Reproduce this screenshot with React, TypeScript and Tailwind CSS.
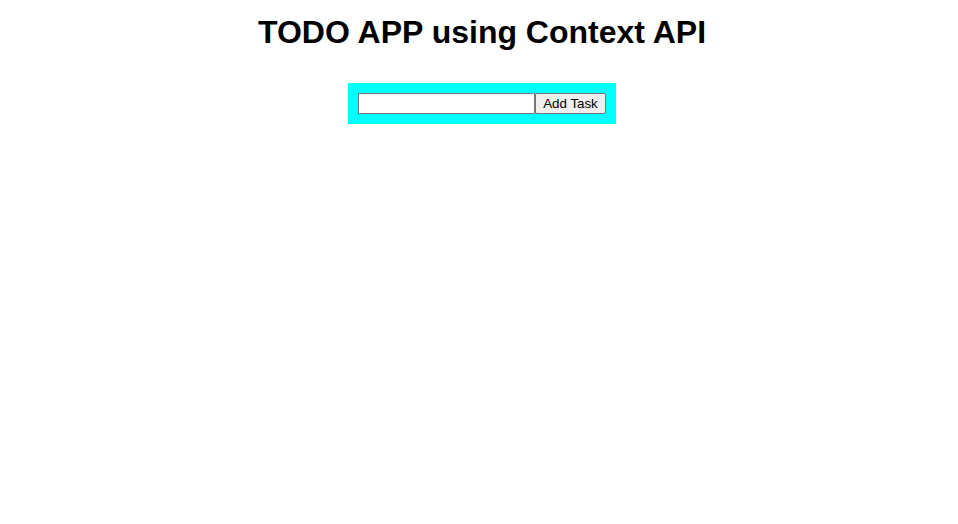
export default function App() {
  return (
    <div className="min-h-screen bg-white pl-[6px] font-['Liberation_Sans',Arial,sans-serif] text-black">
      <div className="flex flex-col items-center">
        <h1 className="mt-[14px] mb-[32px] text-[32px] leading-[37px] font-bold">TODO APP using Context API</h1>
        <div className="flex items-center bg-[#00ffff] p-[10px]">
          <input
            type="text"
            className="h-[21px] w-[177px] border border-[#767676] bg-white px-[2px] text-[13.33px] outline-none"
          />
          <button className="h-[21px] w-[71px] rounded-[2px] border border-[#767676] bg-[#efefef] text-[13.33px] leading-none">
            Add Task
          </button>
        </div>
      </div>
    </div>
  );
}
